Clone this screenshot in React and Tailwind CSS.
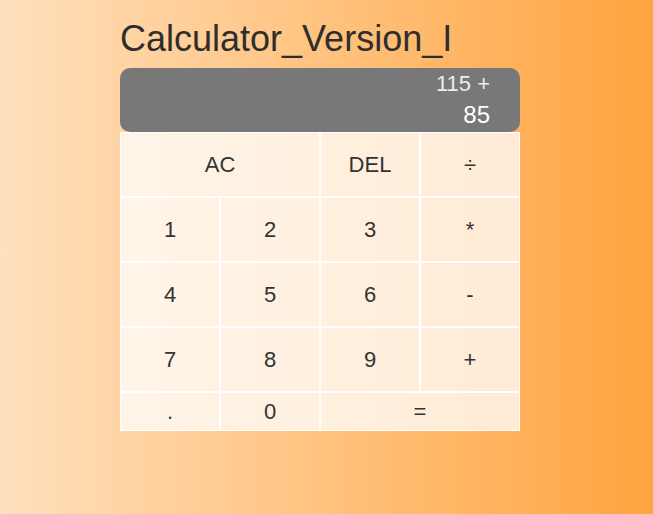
import React, { useState } from 'react';

const Button = ({ label, span = '' }) => (
    <button
        className={`flex items-center justify-center border border-white bg-[rgba(255,255,255,0.75)] text-[22px] text-[#333] cursor-pointer hover:bg-[rgba(255,255,255,0.9)] ${span}`}
    >
        {label}
    </button>
);

const App = () => {
    const [previous] = useState('115 +');
    const [current] = useState('85');

    return (
        <div
            className="min-h-screen w-full bg-[linear-gradient(to_right,#ffe0bd,#ffa43f)] pl-[120px] pt-[18px]"
            style={{ fontFamily: '"Liberation Sans", Arial, sans-serif', height: '514px' }}
        >
            <div className="w-[400px]">
                <h1 className="text-[36px] leading-[41px] text-[#2e2e2e] mb-[9px]">
                    Calculator_Version_I
                </h1>

                <div className="h-[64px] rounded-[10px] bg-[#787878] pr-[30px] flex flex-col items-end justify-around">
                    <div className="text-[22px] leading-[25px] text-[rgba(255,255,255,0.88)]">{previous}</div>
                    <div className="text-[24px] leading-[28px] text-white">{current}</div>
                </div>

                <div className="grid grid-cols-[repeat(4,100px)] grid-rows-[repeat(4,65px)_39px]">
                    <Button label="AC" span="col-span-2" />
                    <Button label="DEL" />
                    <Button label="÷" />
                    <Button label="1" />
                    <Button label="2" />
                    <Button label="3" />
                    <Button label="*" />
                    <Button label="4" />
                    <Button label="5" />
                    <Button label="6" />
                    <Button label="-" />
                    <Button label="7" />
                    <Button label="8" />
                    <Button label="9" />
                    <Button label="+" />
                    <Button label="." />
                    <Button label="0" />
                    <Button label="=" span="col-span-2" />
                </div>
            </div>
        </div>
    );
};

export default App;
